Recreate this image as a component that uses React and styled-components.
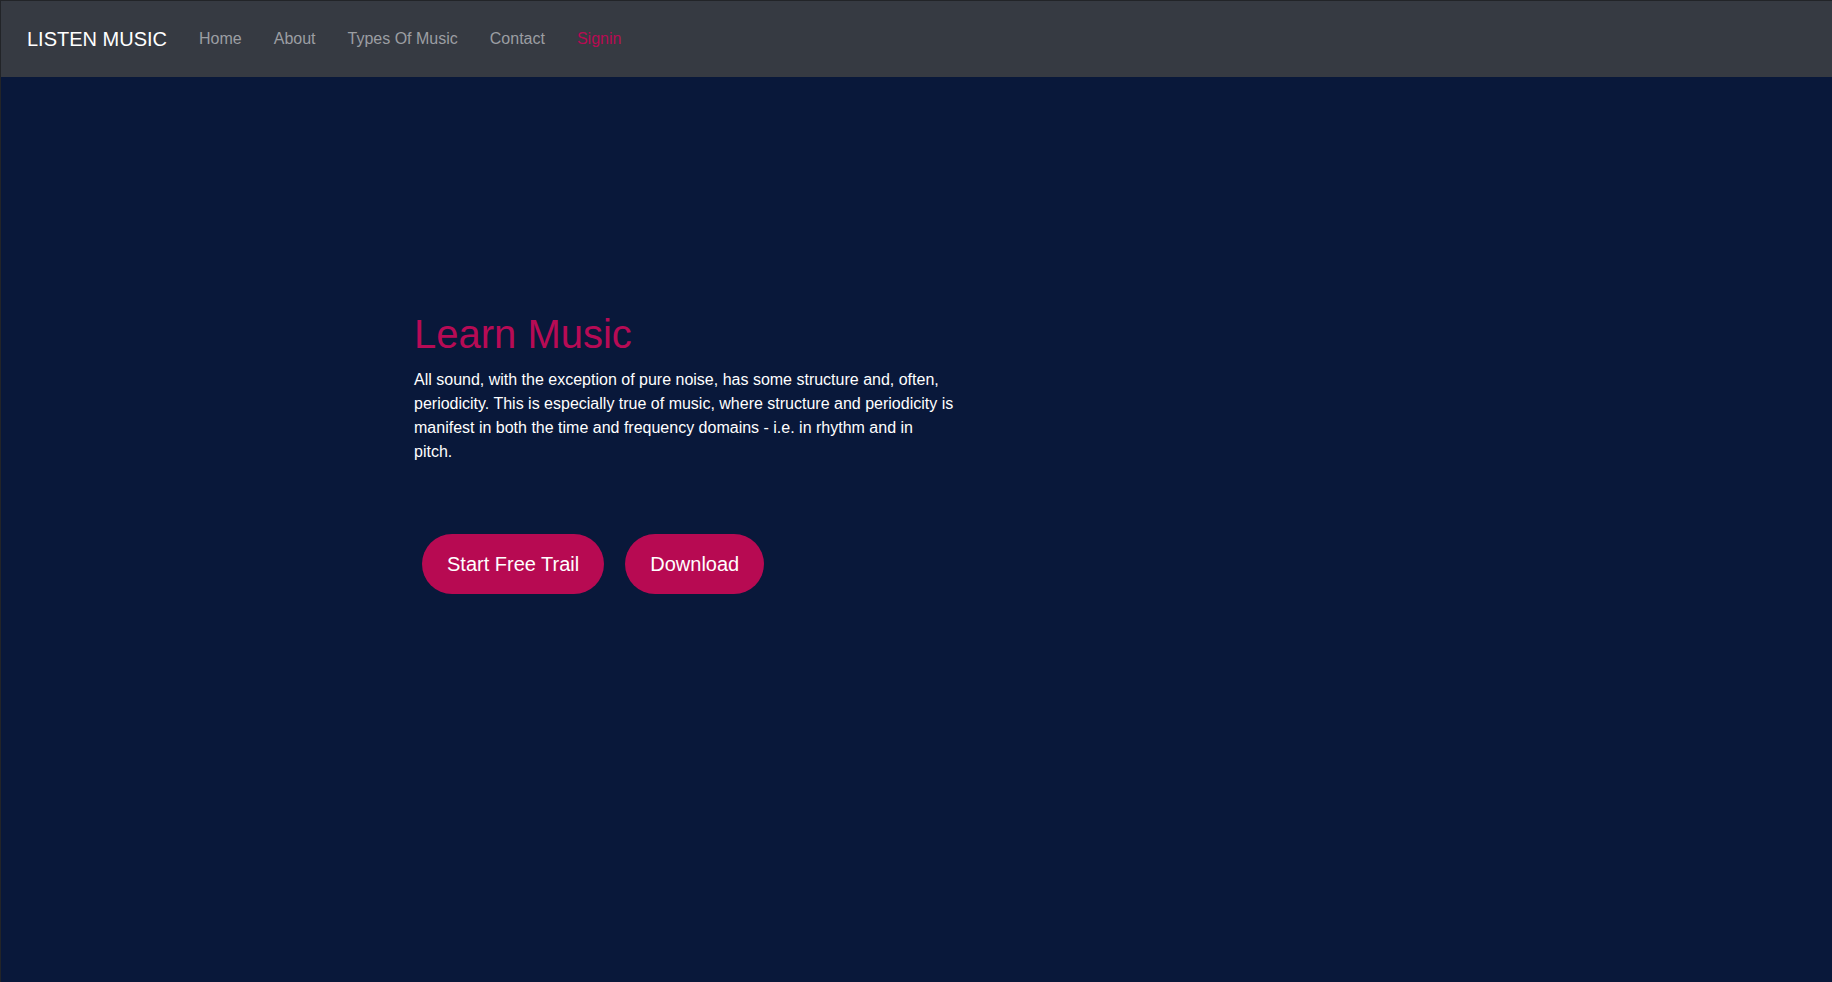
import React from 'react'
import styled, { createGlobalStyle } from 'styled-components'

const GlobalStyle = createGlobalStyle`
  html, body {
    margin: 0;
    padding: 0;
    background: #09183a;
  }
  * { box-sizing: border-box; }
  body {
    font-family: "Liberation Sans", Arial, sans-serif;
  }
`

const Page = styled.div`
  height: 100vh;
  overflow: hidden;
  background: #09183a;
  border-top: 1px solid #222428;
  border-left: 1px solid #222428;
  display: flex;
  flex-direction: column;
`

const Navbar = styled.nav`
  height: 76px;
  flex-shrink: 0;
  background: #363a42;
  display: flex;
  align-items: center;
  padding: 0 26px;
`

const Brand = styled.a`
  color: #ffffff;
  font-size: 20px;
  margin-right: 16px;
  text-decoration: none;
`

const NavList = styled.ul`
  display: flex;
  list-style: none;
  margin: 0;
  padding: 0;
`

const NavLink = styled.a`
  display: block;
  padding: 8px 16px;
  font-size: 16px;
  color: ${p => (p.$accent ? '#b80a52' : '#9c9ea2')};
  text-decoration: none;
`

const Hero = styled.main`
  flex: 1;
  padding: 233px 0 0 413px;
`

const Title = styled.h1`
  margin: 0 0 10px;
  font-size: 40px;
  font-weight: 400;
  line-height: 1.2;
  color: #b70b55;
`

const Text = styled.p`
  margin: 0;
  max-width: 540px;
  font-size: 16px;
  line-height: 24px;
  color: #ffffff;
`

const Actions = styled.div`
  display: flex;
  gap: 21px;
  margin: 70px 0 0 8px;
`

const Button = styled.button`
  height: 60px;
  padding: 0 25px;
  border: none;
  border-radius: 30px;
  background: #b70a52;
  color: #ffffff;
  font-family: "Liberation Sans", Arial, sans-serif;
  font-size: 20px;
  cursor: pointer;
`

const links = ['Home', 'About', 'Types Of Music', 'Contact']

const App = () => {
  return (
    <Page>
      <GlobalStyle />
      <Navbar>
        <Brand href="#">LISTEN MUSIC</Brand>
        <NavList>
          {links.map(l => (
            <li key={l}><NavLink href="#">{l}</NavLink></li>
          ))}
          <li><NavLink href="#" $accent>Signin</NavLink></li>
        </NavList>
      </Navbar>
      <Hero>
        <Title>Learn Music</Title>
        <Text>
          All sound, with the exception of pure noise, has some structure and, often,
          periodicity. This is especially true of music, where structure and periodicity is
          manifest in both the time and frequency domains - i.e. in rhythm and in pitch.
        </Text>
        <Actions>
          <Button>Start Free Trail</Button>
          <Button>Download</Button>
        </Actions>
      </Hero>
    </Page>
  )
}

export default App
